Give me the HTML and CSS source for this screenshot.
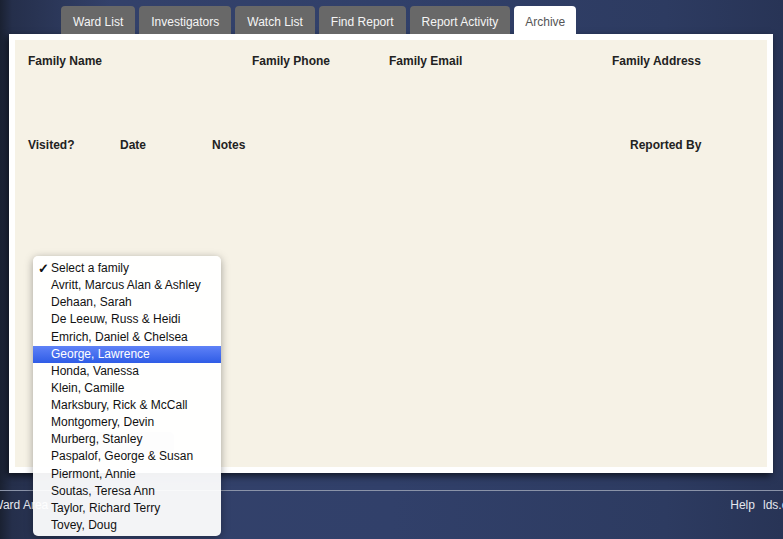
FILE: index.html
```html
<!DOCTYPE html>
<html>
<head>
<meta charset="utf-8">
<link rel="stylesheet" href="styles.css">
</head>
<body>
<div class="page">
  <nav class="tabs">
    <div class="tab">Ward List</div>
    <div class="tab">Investigators</div>
    <div class="tab">Watch List</div>
    <div class="tab">Find Report</div>
    <div class="tab">Report Activity</div>
    <div class="tab active">Archive</div>
  </nav>
  <section class="panel">
    <div class="row row-family">
      <span>Family Name</span>
      <span>Family Phone</span>
      <span>Family Email</span>
      <span>Family Address</span>
    </div>
    <div class="row row-visit">
      <span>Visited?</span>
      <span>Date</span>
      <span>Notes</span>
      <span>Reported By</span>
    </div>
    <div class="select-btn"></div>
  </section>
  <footer class="footer">
    <span class="ward">Ward Area</span>
    <span class="links"><span>Help</span><span>lds.org</span></span>
  </footer>
  <ul class="menu">
    <li><span class="check">✓</span>Select a family</li>
    <li>Avritt, Marcus Alan &amp; Ashley</li>
    <li>Dehaan, Sarah</li>
    <li>De Leeuw, Russ &amp; Heidi</li>
    <li>Emrich, Daniel &amp; Chelsea</li>
    <li class="hl">George, Lawrence</li>
    <li>Honda, Vanessa</li>
    <li>Klein, Camille</li>
    <li>Marksbury, Rick &amp; McCall</li>
    <li>Montgomery, Devin</li>
    <li>Murberg, Stanley</li>
    <li>Paspalof, George &amp; Susan</li>
    <li>Piermont, Annie</li>
    <li>Soutas, Teresa Ann</li>
    <li>Taylor, Richard Terry</li>
    <li>Tovey, Doug</li>
  </ul>
</div>
</body>
</html>
```

FILE: styles.css
```css
html, body {
  margin: 0;
  padding: 0;
  width: 783px;
  height: 539px;
  overflow: hidden;
}
body {
  font-family: "Liberation Sans", Arial, sans-serif;
  font-size: 12px;
  background: linear-gradient(to right, #1a2132 0px, #252f4b 12px, #33416a 110px, #31406a 50%, #2d3b61 85%, #283456 100%);
}
.page {
  position: relative;
  width: 783px;
  height: 539px;
  padding-top: 6px;
  box-sizing: border-box;
}
.tabs {
  display: flex;
  gap: 4px;
  padding-left: 61px;
  height: 28px;
}
.tab {
  background: #686868;
  color: #f5f5f5;
  padding: 4px 12px 0;
  height: 24px;
  line-height: 24px;
  border-radius: 4px 4px 0 0;
}
.tab.active {
  background: #ffffff;
  color: #555555;
  padding: 4px 11px 0;
}
.panel {
  margin-left: 9px;
  border: 6px solid #ffffff;
  background: #f6f2e6;
  box-shadow: -2px 3px 7px rgba(0, 0, 0, 0.65);
  padding: 14px 0 0 13px;
  box-sizing: content-box;
  height: 413px;
  width: 739px;
}
.row {
  display: grid;
  font-weight: bold;
  color: #222;
  line-height: 14px;
}
.row-family {
  grid-template-columns: 224px 137px 223px auto;
}
.row-visit {
  margin-top: 70px;
  grid-template-columns: 92px 92px 418px auto;
}
.select-btn {
  margin: 280px 0 0 28px;
  width: 118px;
  height: 21px;
  border-radius: 5px;
  background: #d2d2d2;
}
.footer {
  margin-top: 17px;
  border-top: 1px solid #8a93a8;
  display: flex;
  justify-content: space-between;
  color: #e4e7ee;
  line-height: 14px;
  padding-top: 7px;
}
.ward {
  margin-left: -8px;
}
.links {
  display: flex;
  gap: 8px;
  margin-right: -16px;
}
.menu {
  position: absolute;
  left: 33px;
  top: 256px;
  width: 188px;
  margin: 0;
  padding: 4px 0 2px;
  list-style: none;
  background: rgba(255, 255, 255, 0.94);
  border-radius: 5px;
  box-shadow: 0 2px 8px rgba(0, 0, 0, 0.35);
  color: #111;
}
.menu li {
  position: relative;
  height: 17.13px;
  line-height: 17px;
  padding-left: 18px;
  white-space: nowrap;
}
.menu .check {
  position: absolute;
  left: 5px;
  top: 0;
  font-weight: bold;
  font-size: 13px;
}
.menu li.hl {
  background: linear-gradient(#5f82f7, #2f5ce6);
  color: #ffffff;
}
```
